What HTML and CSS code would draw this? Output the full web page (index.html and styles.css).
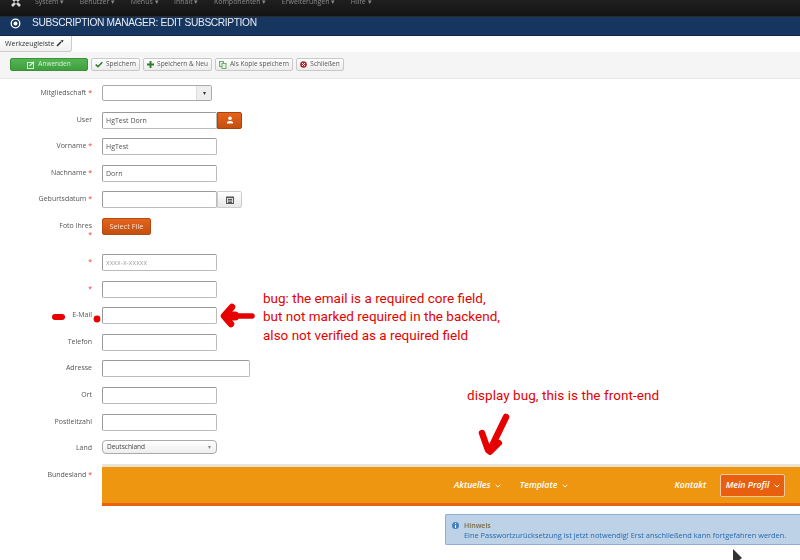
FILE: index.html
```html
<!DOCTYPE html>
<html lang="de">
<head>
<meta charset="utf-8">
<title>Subscription Manager: Edit Subscription</title>
<link rel="stylesheet" href="styles.css">
</head>
<body>
<header class="topbar soft">
  <svg class="logo" width="12" height="12" viewBox="0 0 12 12"><path d="M2 2 L10 10 M10 2 L2 10" stroke="#d8d8d8" stroke-width="2.6" fill="none"/><circle cx="6" cy="6" r="1.6" fill="#1a1a1a"/></svg>
  <nav class="menu">
    <span class="mi">System ▾</span><span class="mi">Benutzer ▾</span><span class="mi">Menüs ▾</span><span class="mi">Inhalt ▾</span><span class="mi">Komponenten ▾</span><span class="mi">Erweiterungen ▾</span><span class="mi">Hilfe ▾</span>
  </nav>
</header>
<div class="titlebar">
  <svg class="soft" width="11" height="11" viewBox="0 0 11 11"><circle cx="5.5" cy="5.5" r="4.3" fill="none" stroke="#fff" stroke-width="1.3"/><circle cx="5.5" cy="5.5" r="2" fill="#fff"/></svg>
  <h1 class="soft">SUBSCRIPTION MANAGER: EDIT SUBSCRIPTION</h1>
</div>
<div class="tabrow soft">
  <div class="tab">Werkzeugleiste
    <svg width="8" height="8" viewBox="0 0 8 8"><path d="M1 7 L5 3" stroke="#222" stroke-width="1.4"/><path d="M4.5 1.5 L6.5 3.5 L7.5 1 Z" fill="#222"/></svg>
  </div>
</div>
<div class="toolbar">
  <button class="btn green soft"><svg width="8" height="8" viewBox="0 0 8 8"><rect x=".5" y="1.5" width="6" height="6" fill="none" stroke="#d5efd5"/><path d="M2.5 5 L7 .7" stroke="#d5efd5" stroke-width="1.3"/></svg>Anwenden</button>
  <button class="btn w49 soft"><svg width="8" height="7" viewBox="0 0 8 7"><path d="M.7 3.5 L3 5.7 L7.3 1.2" fill="none" stroke="#2d7d2d" stroke-width="1.6"/></svg>Speichern</button>
  <button class="btn w69 soft"><svg width="7" height="7" viewBox="0 0 7 7"><path d="M3.5 0 V7 M0 3.5 H7" stroke="#2d7d2d" stroke-width="1.9"/></svg>Speichern &amp; Neu</button>
  <button class="btn w78 soft"><svg width="8" height="8" viewBox="0 0 8 8"><rect x=".5" y=".5" width="4" height="5" fill="#e8f3e8" stroke="#6fa86f"/><rect x="3" y="2.5" width="4" height="5" fill="#e8f3e8" stroke="#6fa86f"/></svg>Als Kopie speichern</button>
  <button class="btn w48 soft"><svg width="7" height="7" viewBox="0 0 7 7"><circle cx="3.5" cy="3.5" r="3.3" fill="#b5252a"/><path d="M2 2 L5 5 M5 2 L2 5" stroke="#fff"/></svg>Schließen</button>
</div>
<main class="content">
  <form class="form">
    <div class="row soft"><label>Mitgliedschaft <i>*</i></label><div class="select"><span class="arrow">▾</span></div></div>
    <div class="row soft"><label>User</label><input class="input" value="HgTest Dorn"><span class="addon orange"><svg width="8" height="8" viewBox="0 0 8 8"><circle cx="4" cy="2.2" r="1.8" fill="#fff"/><path d="M1 7.5 V6 L3 5 H5 L7 6 V7.5 Z" fill="#fff"/></svg></span></div>
    <div class="row soft"><label>Vorname <i>*</i></label><input class="input" value="HgTest"></div>
    <div class="row soft"><label>Nachname <i>*</i></label><input class="input" value="Dorn"></div>
    <div class="row soft"><label>Geburtsdatum <i>*</i></label><input class="input"><span class="addon gray"><svg width="8" height="8" viewBox="0 0 8 8"><rect x=".5" y="1" width="7" height="6.5" fill="#ddd" stroke="#555"/><path d="M.5 1.5 H7.5 M2 3.5 H6 M2 5 H6 M2 6.5 H6" stroke="#555"/></svg></span></div>
    <div class="row tall soft"><label>Foto Ihres<br><i>*</i></label><span class="file">Select File</span></div>
    <div class="row soft"><label><i>*</i></label><input class="input" placeholder="xxxx-x-xxxxx"></div>
    <div class="row soft"><label><i>*</i></label><input class="input"></div>
    <div class="row soft"><label>E-Mail</label><input class="input"></div>
    <div class="row soft"><label>Telefon</label><input class="input"></div>
    <div class="row soft"><label>Adresse</label><input class="input wide"></div>
    <div class="row soft"><label>Ort</label><input class="input"></div>
    <div class="row soft"><label>Postleitzahl</label><input class="input"></div>
    <div class="row soft"><label>Land</label><div class="country">Deutschland<span class="caret">▾</span></div></div>
    <div class="row last"><label class="soft">Bundesland <i>*</i></label>
      <div class="shot">
        <div class="band">
          <nav class="frontnav">
            <span class="fi">Aktuelles <svg class="chev" width="6" height="4" viewBox="0 0 6 4"><path d="M.7 .8 L3 3 L5.3 .8" fill="none" stroke="#fff" stroke-width="1"/></svg></span>
            <span class="fi">Template <svg class="chev" width="6" height="4" viewBox="0 0 6 4"><path d="M.7 .8 L3 3 L5.3 .8" fill="none" stroke="#fff" stroke-width="1"/></svg></span>
            <span class="fi kontakt">Kontakt</span>
            <span class="fi profil">Mein Profil <svg class="chev" width="6" height="4" viewBox="0 0 6 4"><path d="M.7 .8 L3 3 L5.3 .8" fill="none" stroke="#fff" stroke-width="1"/></svg></span>
          </nav>
        </div>
        <div class="alert">
          <svg width="7" height="7" viewBox="0 0 7 7"><circle cx="3.5" cy="3.5" r="3.5" fill="#4a7fc0"/><path d="M3.5 1 V2 M3.5 3 V6" stroke="#fff"/></svg>
          <div><b>Hinweis</b><p>Eine Passwortzurücksetzung ist jetzt notwendig! Erst anschließend kann fortgefahren werden.</p></div>
        </div>
      </div>
    </div>
  </form>
  <p class="note n1">bug: the email is a required core field,<br>but not marked required in the backend,<br>also not verified as a required field</p>
  <p class="note n2">display bug, this is the front-end</p>
  <svg class="scribble" width="800" height="560" viewBox="0 0 800 560">
    <g fill="none" stroke="#e60000" stroke-linecap="round" stroke-linejoin="round">
      <path d="M55 316 H62" stroke-width="6"/>
      <circle cx="97" cy="318" r="3.4" fill="#e60000" stroke="none"/>
      <path d="M252 315 H226" stroke-width="5.5"/>
      <path d="M232 306 L224 315 L231 323" stroke-width="6.5"/>
      <path d="M228 315 L235 315" stroke-width="9"/>
      <path d="M506 416 L490 449" stroke-width="6.5"/>
      <path d="M482 432 L488 449" stroke-width="6.5"/>
      <path d="M499 442 L490 451" stroke-width="6"/>
    </g>
    <path d="M733 548 V560 H738 L742 557 Z" fill="#333"/>
  </svg>
</main>
</body>
</html>
```
FILE: styles.css
```css
* { box-sizing: border-box; }
html, body { margin: 0; height: 100%; }
body { width: 800px; height: 560px; overflow: hidden; background: #fff; font-family: "Open Sans", "Liberation Sans", sans-serif; font-size: 7px; color: #444; display: flex; flex-direction: column; }
.soft { filter: blur(.35px); }
.topbar { height: 17px; background: linear-gradient(#1f1f1f, #131313); display: flex; align-items: flex-start; border-bottom: 1px solid #2a2a2a; flex: none; overflow: hidden; }
.logo { margin: -4px 0 0 10px; flex: none; }
.menu { display: flex; margin: -3px 0 0 13px; color: #8a8a8a; font-size: 7px; line-height: 10px; }
.mi { white-space: nowrap; margin-right: 15.4px; }
.titlebar { height: 19px; background: #17365f; border-bottom: 1px solid #10294b; display: flex; align-items: center; padding: 0 0 6px 10px; gap: 11px; flex: none; }
.titlebar h1 { margin: 0; font: 400 10.2px/1 "Liberation Sans", sans-serif; letter-spacing: -.36px; color: #e6ebf2; }
.tabrow { height: 16px; flex: none; position: relative; z-index: 1; }
.tab { width: 72px; height: 16px; background: linear-gradient(#fff, #f0f0f0); border: 1px solid #ccc; border-left: 0; border-top: 0; border-radius: 0 0 3px 0; color: #333; padding-left: 5px; line-height: 16px; }
.tab svg { vertical-align: -1px; }
.toolbar { height: 27px; background: #f5f5f5; border-bottom: 1px solid #e6e6e6; display: flex; align-items: flex-start; padding: 6px 0 0 10px; gap: 3px; flex: none; }
.btn { height: 13px; padding: 0; border: 1px solid #c8c8c8; border-radius: 2px; background: linear-gradient(#fff, #ececec); color: #555; font: 6.5px/1 "Open Sans", sans-serif; display: flex; align-items: center; justify-content: center; gap: 3px; white-space: nowrap; }
.btn.green { width: 78px; background: linear-gradient(#55b555, #3f9f3f); border-color: #3a913a; color: #d8f0d8; }
.btn.w49 { width: 49px; }
.btn.w69 { width: 69px; }
.btn.w78 { width: 78px; }
.btn.w48 { width: 48px; }
.content { position: relative; flex: 1; min-height: 0; }
.form { padding-top: 6px; }
.row { display: flex; align-items: flex-start; height: 26.62px; }
.row.tall { height: 36px; }
.row label { width: 92px; flex: none; margin-right: 10px; text-align: right; line-height: 9px; padding-top: 3px; color: #555; }
.row i { color: #e33; font-style: normal; }
.input { width: 115px; height: 17px; border: 1px solid #9a9a9a; border-right-color: #bbb; border-bottom-color: #bbb; border-radius: 2px; padding: 0 3px; font: 7px "Open Sans", sans-serif; color: #555; background: #fff; outline: 0; }
.input::placeholder { color: #aaa; }
.input.wide { width: 148px; }
.select { width: 110px; height: 16px; border: 1px solid #aaa; border-radius: 2px; background: #fff; display: flex; justify-content: flex-end; }
.arrow { width: 15px; background: #eee; border-left: 1px solid #ddd; text-align: center; color: #333; line-height: 14px; font-size: 6px; }
.addon { width: 25px; height: 17px; display: flex; align-items: center; justify-content: center; border-radius: 0 2px 2px 0; }
.addon.orange { background: linear-gradient(#e4641c, #c44f0e); border: 1px solid #a8430c; }
.addon.gray { background: linear-gradient(#fff, #e8e8e8); border: 1px solid #ccc; }
.file { width: 49px; height: 17px; background: linear-gradient(#e4641c, #c44f0e); border: 1px solid #b5480d; border-radius: 2px; color: #f5e2d6; text-align: center; line-height: 15px; font-size: 7.4px; }
.country { width: 115px; height: 14px; border: 1px solid #aaa; border-radius: 4px; background: linear-gradient(#fff, #eee); padding: 0 5px 0 4px; line-height: 12px; color: #444; font-size: 6.5px; display: flex; justify-content: space-between; }
.caret { color: #888; font-size: 6px; }
.row.last { height: auto; }
.shot { margin-top: -3px; width: 698px; flex: none; filter: blur(.25px); }
.band { height: 42px; background: #ef9610; border-top: 3px solid #e8e4d8; border-bottom: 3px solid #e8640f; }
.frontnav { display: flex; height: 36px; align-items: center; font: italic 600 8.8px "Open Sans", sans-serif; color: #fff; padding: 1px 0 0 352px; }
.fi { white-space: nowrap; }
.fi + .fi { margin-left: 19px; }
.chev { margin-left: 2px; vertical-align: 0; }
.fi.kontakt { margin-left: 107px; }
.fi.profil { width: 65px; height: 23px; background: #e8600f; border: 1px solid #f6c9a0; border-radius: 2px; text-align: center; line-height: 21px; margin-left: 14px; }
.alert { margin: 8px 0 0 343px; height: 31px; width: 355px; background: #bdd2e6; border: 1px solid #8fadd6; border-right: 0; border-radius: 2px 0 0 2px; display: flex; gap: 5px; padding: 6px 0 0 6px; }
.alert svg { margin-top: 1px; flex: none; }
.alert b { display: block; font: 600 7px/9px "Open Sans", sans-serif; color: #7a6a45; }
.alert p { margin: 0; font: 7.4px/10px "Open Sans", sans-serif; color: #2668b0; white-space: nowrap; }
.note { position: absolute; margin: 0; color: #e60000; font: 13.5px/18.3px "Roboto", "Liberation Sans", sans-serif; white-space: nowrap; }
.n1 { left: 263px; top: 210px; }
.n2 { left: 467px; top: 307px; letter-spacing: .05px; }
.scribble { position: absolute; left: 0; top: -78px; pointer-events: none; }
```
